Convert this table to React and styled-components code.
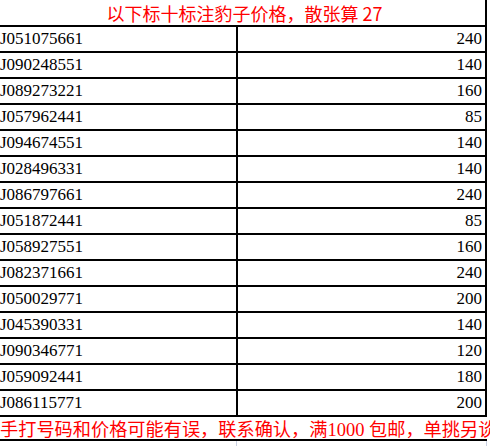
import styled, { createGlobalStyle } from "styled-components";

const GlobalStyle = createGlobalStyle`
  html, body {
    margin: 0;
    padding: 0;
    background: #fff;
    overflow: hidden;
  }
`;

const rows = [
  ["J051075661", 240],
  ["J090248551", 140],
  ["J089273221", 160],
  ["J057962441", 85],
  ["J094674551", 140],
  ["J028496331", 140],
  ["J086797661", 240],
  ["J051872441", 85],
  ["J058927551", 160],
  ["J082371661", 240],
  ["J050029771", 200],
  ["J045390331", 140],
  ["J090346771", 120],
  ["J059092441", 180],
  ["J086115771", 200],
];

const serif = `"Liberation Serif", "Times New Roman", Tinos, "DejaVu Serif", "Noto Serif", serif`;

const Sheet = styled.div`
  width: 487px;
  display: flex;
  flex-direction: column;
`;

const Header = styled.div`
  height: 25px;
  border-right: 2px solid #000;
  border-bottom: 2px solid #000;
  display: flex;
  align-items: center;
  justify-content: center;
  padding-left: 4px;
  color: #f00;
  font-family: "Noto Sans CJK SC", "Noto Sans", sans-serif;
  font-size: 18px;
  white-space: nowrap;
`;

const Row = styled.div`
  display: grid;
  grid-template-columns: 238px 1fr;
  height: 24px;
  border-bottom: 2px solid #000;
`;

const Cell = styled.div`
  display: flex;
  align-items: center;
  justify-content: ${(p) => (p.$right ? "flex-end" : "flex-start")};
  padding: ${(p) => (p.$right ? "0 3px 0 0" : "0")};
  border-right: 2px solid #000;
  font-family: ${serif};
  font-size: 17px;
  color: #000;
`;

const Footer = styled.div`
  height: 22px;
  line-height: 22px;
  border-bottom: 2px solid #000;
  color: #f00;
  font-family: "Noto Sans CJK SC", sans-serif;
  font-size: 18.2px;
  white-space: nowrap;
`;

const Num = styled.span`
  font-family: ${serif};
  font-size: 18.5px;
`;

const Grid = styled.div`
  display: grid;
  grid-template-columns: 237px 1fr;
  height: 6px;
`;

const GridCell = styled.div`
  border-right: 1px solid #c9d0e2;
`;

export default function App() {
  return (
    <>
      <GlobalStyle />
      <Sheet>
        <Header>以下标十标注豹子价格，散张算 27</Header>
        {rows.map(([code, price]) => (
          <Row key={code}>
            <Cell>{code}</Cell>
            <Cell $right>{price}</Cell>
          </Row>
        ))}
        <Footer>
          手打号码和价格可能有误，联系确认，满<Num>1000 </Num>包邮，单挑另谈
        </Footer>
        <Grid>
          <GridCell />
          <GridCell />
        </Grid>
      </Sheet>
    </>
  );
}
